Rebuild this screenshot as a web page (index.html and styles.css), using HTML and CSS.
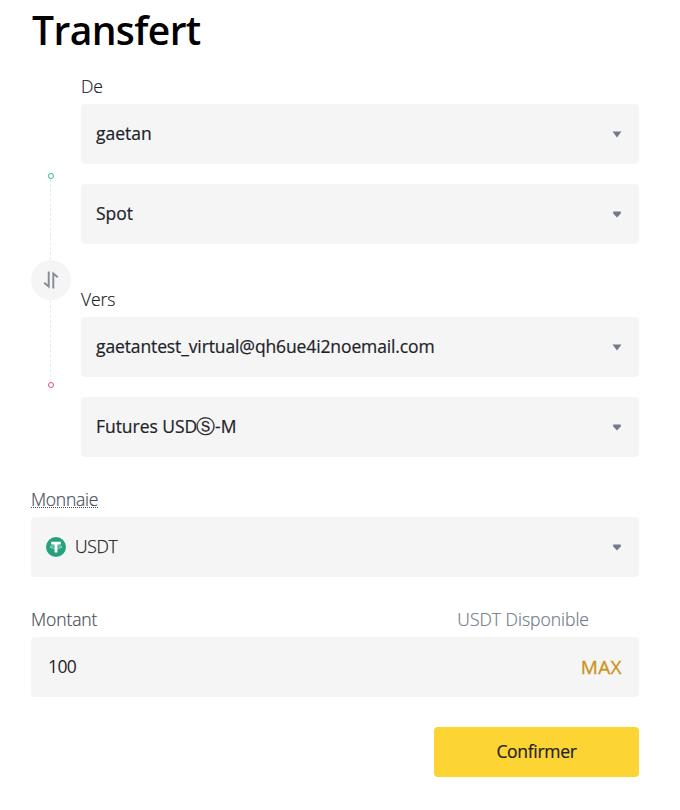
FILE: index.html
```html
<!DOCTYPE html>
<html lang="fr">
<head>
    <meta charset="UTF-8">
    <meta name="viewport" content="width=device-width, initial-scale=1.0">
    <title>Transfert</title>
    <link rel="stylesheet" href="styles.css">
</head>
<body>
    <div class="transfer">
        <h1 class="title">Transfert</h1>
        <div class="accounts">
            <div class="rail">
                <span class="dot from"></span>
                <span class="line"></span>
                <div class="swap">
                    <svg width="16" height="18" viewBox="0 0 16 18" fill="none" stroke="#848a98" stroke-width="1.9">
                        <path d="M5.7 0.5V15.5L1.2 11.8"/>
                        <path d="M10.3 17.5V2.5L14.8 6.2"/>
                    </svg>
                </div>
                <span class="line lower"></span>
                <span class="dot to"></span>
            </div>
            <div class="fields">
                <div class="label dark">De</div>
                <div class="select">
                    <span class="value">gaetan</span>
                    <svg class="caret" width="10" height="7" viewBox="0 0 10 7"><path d="M0.5 0.5H9.5L5 6.5Z"/></svg>
                </div>
                <div class="select">
                    <span class="value">Spot</span>
                    <svg class="caret" width="10" height="7" viewBox="0 0 10 7"><path d="M1.2 0.5H8.8V2.5L5 6.5L1.2 2.5Z"/></svg>
                </div>
                <div class="label dark second">Vers</div>
                <div class="select">
                    <span class="value email">gaetantest_virtual@qh6ue4i2noemail.com</span>
                    <svg class="caret" width="10" height="7" viewBox="0 0 10 7"><path d="M0.5 0.5H9.5L5 6.5Z"/></svg>
                </div>
                <div class="select">
                    <span class="value futures">Futures USD<span class="circled">Ⓢ</span>-M</span>
                    <svg class="caret" width="10" height="7" viewBox="0 0 10 7"><path d="M1.2 0.5H8.8V2.5L5 6.5L1.2 2.5Z"/></svg>
                </div>
            </div>
        </div>
        <div class="label coin-label"><span class="dotted">Monnaie</span></div>
        <div class="select">
            <svg class="coin" width="20" height="20" viewBox="0 0 20 20">
                <circle cx="10" cy="10" r="10" fill="#26a17b"/>
                <path d="M5.2 4.8H14.8V7.4H11.4V15.5H8.6V7.4H5.2Z" fill="#fff"/>
                <ellipse cx="10" cy="10" rx="6" ry="1.3" fill="none" stroke="#fff" stroke-width="0.6"/>
            </svg>
            <span class="coin-name">USDT</span>
            <svg class="caret" width="10" height="7" viewBox="0 0 10 7"><path d="M1.2 0.5H8.8V2.5L5 6.5L1.2 2.5Z"/></svg>
        </div>
        <div class="label amount-label">
            <span class="montant">Montant</span>
            <span class="available">USDT Disponible</span>
        </div>
        <div class="select amount">
            <span class="number">100</span>
            <span class="max">MAX</span>
        </div>
        <button class="confirm">Confirmer</button>
    </div>
</body>
</html>
```
FILE: styles.css
```css
* {
    box-sizing: border-box;
}
body {
    margin: 0;
    background: #fff;
    color: #1e2329;
    font-family: "Open Sans", "Noto Sans", sans-serif;
    font-size: 17.5px;
    white-space: nowrap;
}
.transfer {
    width: 608px;
    margin-left: 31px;
    display: flex;
    flex-direction: column;
}
.title {
    margin: 0;
    height: 75px;
    padding: 2px 0 0 1px;
    font-size: 39px;
    line-height: 56px;
    font-weight: 600;
    letter-spacing: -0.6px;
    color: #000;
}
.accounts {
    display: flex;
    gap: 10px;
}
.rail {
    width: 40px;
    height: 215px;
    margin-top: 98px;
    display: flex;
    flex-direction: column;
    align-items: center;
}
.dot {
    width: 6px;
    height: 6px;
    border: 1px solid #2ebd85;
    border-radius: 50%;
}
.dot.to {
    border-color: #e0526a;
}
.line {
    height: 81px;
    margin-right: 1px;
    border-left: 1px dashed #e8eaec;
}
.line.lower {
    height: 82px;
}
.swap {
    width: 40px;
    height: 40px;
    border-radius: 50%;
    background: #f5f5f5;
    display: flex;
    align-items: center;
    justify-content: center;
}
.fields {
    flex: 1;
}
.fields .select + .select {
    margin-top: 20px;
}
.label {
    height: 29px;
    line-height: 22px;
    font-weight: 300;
    letter-spacing: -0.1px;
    color: #474d57;
    -webkit-text-stroke: 0.2px;
}
.label.dark {
    color: #1e2329;
}
.label.second {
    margin-top: 44px;
}
.select {
    height: 60px;
    padding: 0 17px 0 15px;
    border-radius: 4px;
    background: #f5f5f5;
    display: flex;
    align-items: center;
}
.value {
    padding-bottom: 2px;
    -webkit-text-stroke: 0.2px;
}
.email {
    letter-spacing: -0.12px;
}
.futures {
    letter-spacing: -0.05px;
}
.circled {
    margin-left: -1px;
    font-family: "DejaVu Sans", sans-serif;
    font-size: 19px;
    line-height: 1;
}
.caret {
    margin-left: auto;
    fill: #707a8a;
}
.coin-label {
    margin-top: 31px;
}
.dotted {
    display: inline-block;
    height: 20px;
    letter-spacing: -0.25px;
    border-bottom: 1px dotted #474d57;
}
.coin {
    margin-right: 9px;
}
.coin-name {
    padding-bottom: 2px;
    font-weight: 300;
    letter-spacing: -0.3px;
    -webkit-text-stroke: 0.25px;
}
.amount-label {
    margin-top: 31px;
    padding-right: 50px;
    display: flex;
    justify-content: space-between;
}
.available {
    letter-spacing: 0;
    color: #707a8a;
}
.amount {
    padding-left: 17px;
    justify-content: space-between;
}
.number {
    padding-bottom: 2px;
    letter-spacing: -0.6px;
}
.max {
    padding-bottom: 1px;
    font-size: 19px;
    letter-spacing: 0.4px;
    color: #c99417;
    -webkit-text-stroke: 0.3px;
}
.confirm {
    align-self: flex-end;
    width: 205px;
    height: 50px;
    margin-top: 30px;
    padding: 0 0 2px;
    border: none;
    border-radius: 4px;
    background: #fcd535;
    color: #1e2329;
    font: inherit;
    letter-spacing: -0.3px;
    -webkit-text-stroke: 0.2px;
}
```
